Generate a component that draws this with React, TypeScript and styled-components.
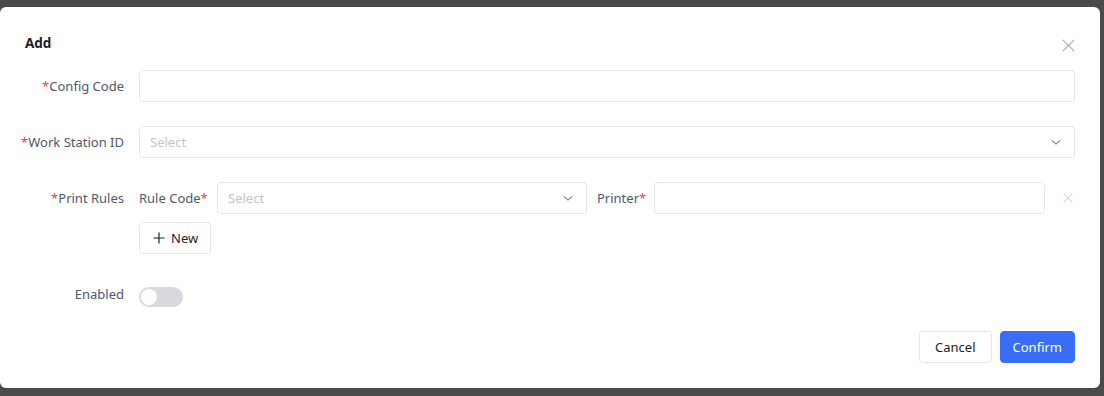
import React, { useState } from 'react';
import styled, { createGlobalStyle } from 'styled-components';

const GlobalStyle = createGlobalStyle`
  html, body {
    margin: 0;
    padding: 0;
    background: #4a4a4a;
  }
  body {
    font-family: 'Noto Sans', 'Open Sans', sans-serif;
    font-size: 13px;
    color: #4e5969;
  }
  * {
    box-sizing: border-box;
  }
`;

const Backdrop = styled.div`
  display: flex;
  width: 1104px;
  height: 396px;
  padding: 7px 4px 8px 0;
  background: #4a4a4a;
`;

const Modal = styled.div`
  display: flex;
  flex-direction: column;
  width: 1100px;
  height: 381px;
  background: #ffffff;
  border-radius: 6px;
  padding: 25px;
`;

const Header = styled.header`
  display: flex;
  justify-content: space-between;
  align-items: center;
  height: 22px;
  margin-bottom: 16px;
`;

const Title = styled.h2`
  margin: 0;
  font-size: 13.5px;
  font-weight: 700;
  color: #1d2129;
  line-height: 22px;
`;

const CloseButton = styled.button`
  display: flex;
  align-items: center;
  justify-content: center;
  width: 16px;
  height: 16px;
  padding: 0;
  margin-top: 5px;
  margin-right: -1px;
  border: none;
  background: transparent;
  color: #a9aeb8;
  cursor: pointer;
`;

const Row = styled.div<{ $gap?: number }>`
  display: grid;
  grid-template-columns: 114px 1fr;
  align-items: start;
  margin-bottom: ${({ $gap }) => ($gap ?? 24)}px;
`;

const Label = styled.label`
  display: flex;
  justify-content: flex-end;
  padding-right: 15px;
  line-height: 32px;
  color: #4e5969;
  white-space: nowrap;
`;

const Star = styled.span`
  color: #f53f3f;
`;

const Input = styled.input`
  width: 100%;
  height: 32px;
  padding: 0 10px;
  border: 1px solid #e5e6eb;
  border-radius: 4px;
  background: #fff;
  font: inherit;
  color: #1d2129;
  outline: none;
`;

const SelectBox = styled.div<{ $width?: number }>`
  display: flex;
  align-items: center;
  justify-content: space-between;
  width: ${({ $width }) => ($width ? `${$width}px` : '100%')};
  flex: ${({ $width }) => ($width ? 'none' : '1')};
  height: 32px;
  padding: 0 12px 0 10px;
  border: 1px solid #e5e6eb;
  border-radius: 4px;
  background: #fff;
  color: #c0c4cc;
  cursor: pointer;
`;

const RuleColumn = styled.div`
  display: flex;
  flex-direction: column;
  align-items: flex-start;
  gap: 8px;
`;

const RuleLine = styled.div`
  display: flex;
  align-items: center;
  width: 100%;
`;

const InlineLabel = styled.span`
  line-height: 32px;
  color: #4e5969;
  white-space: nowrap;
`;

const RuleCodeLabel = styled(InlineLabel)`
  width: 78px;
`;

const PrinterLabel = styled(InlineLabel)`
  margin: 0 8px 0 10px;
`;

const FlexInput = styled(Input)`
  flex: 1;
  width: auto;
`;

const RemoveCell = styled.div`
  display: flex;
  align-items: center;
  justify-content: flex-end;
  width: 30px;
  padding-right: 2px;
  color: #c9cdd4;
`;

const NewButton = styled.button`
  display: flex;
  align-items: center;
  gap: 6px;
  height: 32px;
  padding: 0 12px 0 13px;
  border: 1px solid #e5e6eb;
  border-radius: 4px;
  background: #fff;
  font: inherit;
  color: #1d2129;
  cursor: pointer;
`;

const Switch = styled.button<{ $on: boolean }>`
  position: relative;
  width: 44px;
  height: 20px;
  margin-top: 9px;
  padding: 0;
  border: none;
  border-radius: 10px;
  background: ${({ $on }) => ($on ? '#3a6df5' : '#d9dadf')};
  cursor: pointer;

  &::after {
    content: '';
    position: absolute;
    top: 2px;
    left: ${({ $on }) => ($on ? '26px' : '2px')};
    width: 16px;
    height: 16px;
    border-radius: 50%;
    background: #fff;
    transition: left 0.2s;
  }
`;

const Footer = styled.footer`
  display: flex;
  justify-content: flex-end;
  gap: 8px;
  margin-top: auto;
`;

const Button = styled.button<{ $primary?: boolean }>`
  height: 32px;
  padding: ${({ $primary }) => ($primary ? '0 12px' : '0 15px')};
  border: 1px solid ${({ $primary }) => ($primary ? '#3a6df5' : '#e5e6eb')};
  border-radius: 4px;
  background: ${({ $primary }) => ($primary ? '#3a6df5' : '#fff')};
  color: ${({ $primary }) => ($primary ? '#fff' : '#1d2129')};
  font: inherit;
  cursor: pointer;
`;

const Chevron = () => (
  <svg width="12" height="12" viewBox="0 0 12 12" fill="none">
    <path d="M2 4.5 6 8l4-3.5" stroke="#86909c" strokeWidth="1.1" strokeLinecap="round" strokeLinejoin="round" />
  </svg>
);

const Cross = ({ size }: { size: number }) => (
  <svg width={size} height={size} viewBox="0 0 12 12" fill="none">
    <path d="M1 1l10 10M11 1 1 11" stroke="currentColor" strokeWidth="1.1" strokeLinecap="round" />
  </svg>
);

const Plus = () => (
  <svg width="12" height="12" viewBox="0 0 12 12" fill="none">
    <path d="M6 0.5v11M0.5 6h11" stroke="#1d2129" strokeWidth="1.2" />
  </svg>
);

const App: React.FC = () => {
  const [enabled, setEnabled] = useState(false);

  return (
    <>
      <GlobalStyle />
      <Backdrop>
        <Modal>
          <Header>
            <Title>Add</Title>
            <CloseButton aria-label="Close">
              <Cross size={13} />
            </CloseButton>
          </Header>

          <Row>
            <Label>
              <Star>*</Star>Config Code
            </Label>
            <Input />
          </Row>

          <Row>
            <Label>
              <Star>*</Star>Work Station ID
            </Label>
            <SelectBox>
              <span>Select</span>
              <Chevron />
            </SelectBox>
          </Row>

          <Row>
            <Label>
              <Star>*</Star>Print Rules
            </Label>
            <RuleColumn>
              <RuleLine>
                <RuleCodeLabel>
                  Rule Code<Star>*</Star>
                </RuleCodeLabel>
                <SelectBox $width={370}>
                  <span>Select</span>
                  <Chevron />
                </SelectBox>
                <PrinterLabel>
                  Printer<Star>*</Star>
                </PrinterLabel>
                <FlexInput />
                <RemoveCell>
                  <Cross size={10} />
                </RemoveCell>
              </RuleLine>
              <NewButton>
                <Plus />
                New
              </NewButton>
            </RuleColumn>
          </Row>

          <Row $gap={0}>
            <Label>Enabled</Label>
            <div>
              <Switch $on={enabled} onClick={() => setEnabled(!enabled)} aria-label="Enabled" />
            </div>
          </Row>

          <Footer>
            <Button>Cancel</Button>
            <Button $primary>Confirm</Button>
          </Footer>
        </Modal>
      </Backdrop>
    </>
  );
};

export default App;
